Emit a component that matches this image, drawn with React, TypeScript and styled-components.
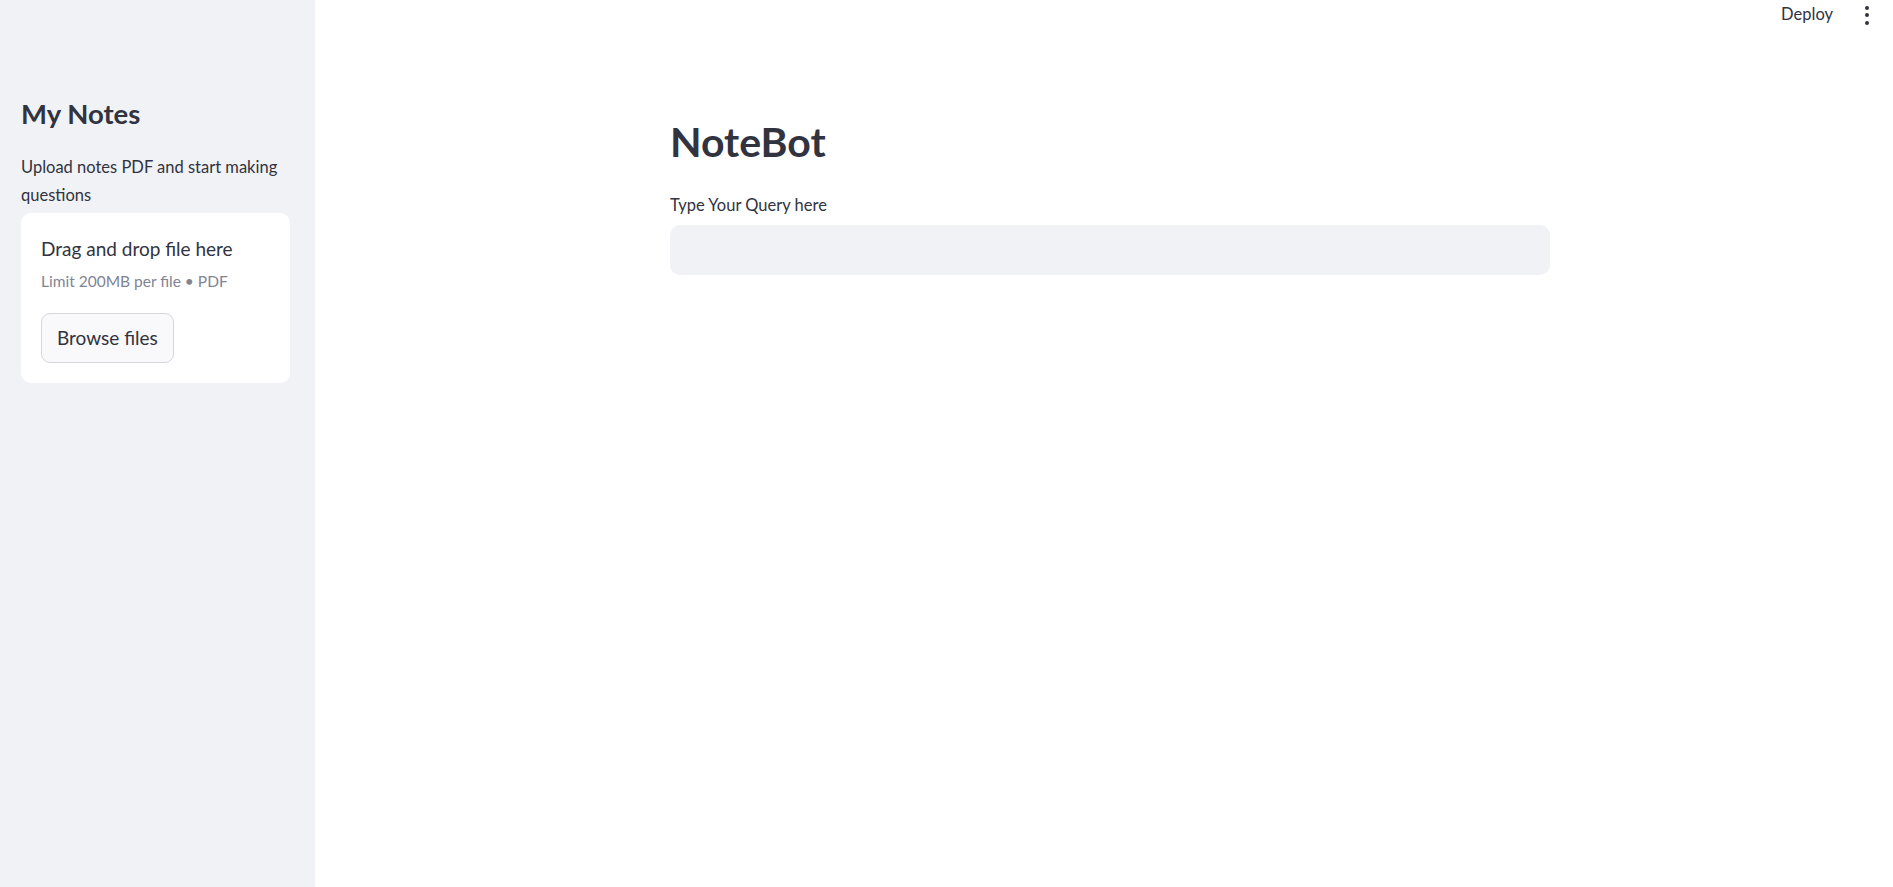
import styled, { createGlobalStyle } from 'styled-components';

const GlobalStyle = createGlobalStyle`
	html, body {
		margin: 0;
		padding: 0;
		background: #ffffff;
		font-family: 'Lato', 'Noto Sans', sans-serif;
		color: #31333f;
	}
	* {
		box-sizing: border-box;
	}
`;

const Layout = styled.div`
	display: flex;
	height: 100vh;
	overflow: hidden;
`;

const Sidebar = styled.aside`
	width: 315px;
	flex-shrink: 0;
	background: #f0f2f6;
	padding: 96px 25px 0 21px;
	display: flex;
	flex-direction: column;
`;

const SidebarTitle = styled.h2`
	margin: 0;
	font-size: 27.5px;
	font-weight: 700;
	line-height: 36px;
	color: #31333f;
`;

const SidebarText = styled.p`
	margin: 21px 0 4px 0;
	font-size: 16.5px;
	line-height: 28px;
	color: #31333f;
`;

const DropZone = styled.section`
	background: #ffffff;
	border-radius: 10px;
	padding: 23px 20px 20px 20px;
	display: flex;
	flex-direction: column;
	align-items: flex-start;
`;

const DropTitle = styled.div`
	font-size: 19px;
	line-height: 26px;
	color: #31333f;
`;

const DropHint = styled.div`
	margin-top: 8px;
	font-size: 15.5px;
	line-height: 22px;
	color: #808495;
`;

const BrowseButton = styled.button`
	margin-top: 21px;
	height: 50px;
	padding: 0 15px 2px 15px;
	border: 1px solid #d5d6db;
	border-radius: 9px;
	background: #f9f9fb;
	font-family: inherit;
	font-size: 19px;
	color: #31333f;
	cursor: pointer;
`;

const Main = styled.main`
	flex: 1;
	display: flex;
	flex-direction: column;
	padding-left: 12px;
`;

const Toolbar = styled.header`
	height: 28px;
	display: flex;
	align-items: center;
	justify-content: flex-end;
	gap: 32px;
	padding-right: 24px;
`;

const DeployLink = styled.span`
	font-size: 16.5px;
	color: #31333f;
`;

const MenuDots = styled.span`
	display: flex;
	flex-direction: column;
	gap: 3.5px;
	padding-top: 2px;
`;

const Dot = styled.span`
	width: 4px;
	height: 4px;
	border-radius: 50%;
	background: #31333f;
`;

const Content = styled.div`
	width: 880px;
	margin: 0 auto;
	padding-top: 88px;
	display: flex;
	flex-direction: column;
`;

const Title = styled.h1`
	margin: 0;
	font-size: 41px;
	font-weight: 700;
	line-height: 52px;
	color: #31333f;
`;

const FieldLabel = styled.label`
	margin-top: 26px;
	font-size: 16.5px;
	line-height: 22px;
	color: #31333f;
`;

const QueryInput = styled.input`
	margin-top: 9px;
	height: 50px;
	border: none;
	border-radius: 10px;
	background: #f0f2f6;
	padding: 0 14px;
	font-family: inherit;
	font-size: 19px;
	color: #31333f;
	outline: none;
`;

function App() {
	return (
		<Layout>
			<GlobalStyle />
			<Sidebar>
				<SidebarTitle>My Notes</SidebarTitle>
				<SidebarText>Upload notes PDF and start making questions</SidebarText>
				<DropZone>
					<DropTitle>Drag and drop file here</DropTitle>
					<DropHint>Limit 200MB per file • PDF</DropHint>
					<BrowseButton type='button'>Browse files</BrowseButton>
				</DropZone>
			</Sidebar>
			<Main>
				<Toolbar>
					<DeployLink>Deploy</DeployLink>
					<MenuDots>
						<Dot />
						<Dot />
						<Dot />
					</MenuDots>
				</Toolbar>
				<Content>
					<Title>NoteBot</Title>
					<FieldLabel htmlFor='query'>Type Your Query here</FieldLabel>
					<QueryInput id='query' type='text' />
				</Content>
			</Main>
		</Layout>
	);
}

export default App;
